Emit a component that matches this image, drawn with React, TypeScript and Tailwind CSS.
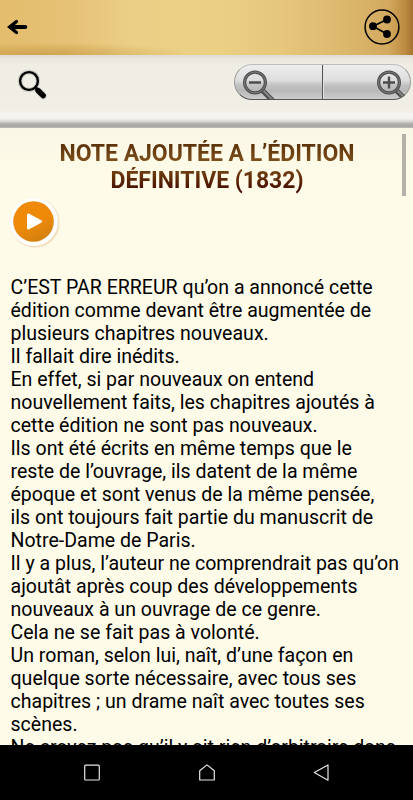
const lines = [
  "C’EST PAR ERREUR qu’on a annoncé cette",
  "édition comme devant être augmentée de",
  "plusieurs chapitres nouveaux.",
  "Il fallait dire inédits.",
  "En effet, si par nouveaux on entend",
  "nouvellement faits, les chapitres ajoutés à",
  "cette édition ne sont pas nouveaux.",
  "Ils ont été écrits en même temps que le",
  "reste de l’ouvrage, ils datent de la même",
  "époque et sont venus de la même pensée,",
  "ils ont toujours fait partie du manuscrit de",
  "Notre-Dame de Paris.",
  "Il y a plus, l’auteur ne comprendrait pas qu’on",
  "ajoutât après coup des développements",
  "nouveaux à un ouvrage de ce genre.",
  "Cela ne se fait pas à volonté.",
  "Un roman, selon lui, naît, d’une façon en",
  "quelque sorte nécessaire, avec tous ses",
  "chapitres ; un drame naît avec toutes ses",
  "scènes.",
  "Ne croyez pas qu’il y ait rien d’arbitraire dans",
];

function Header() {
  return (
    <header className="h-[55px] shrink-0 bg-[linear-gradient(90deg,#e4bd6d_0%,#e6c277_18%,#ebcf86_32%,#ebd084_52%,#e6c77c_68%,#dbb76c_84%,#d3aa5f_94%,#bd8b42_98%,#a87431_100%)]">
      <div className="flex h-full items-center justify-between bg-[radial-gradient(ellipse_150px_13px_at_40px_55px,#c4963fb0,#c4963f00)] pr-[13px] pb-[2px] pl-[7px]">
        <button aria-label="Retour">
          <svg width="21" height="16" viewBox="0 0 21 16" fill="none" stroke="#000">
            <path d="M18.3 8H5" strokeWidth="4" strokeLinecap="round" />
            <path d="M9.5 2.5 3 8l6.5 5.5" strokeWidth="3.2" strokeLinecap="round" strokeLinejoin="round" />
            <path d="M0 8 8 2v12Z" fill="#000" stroke="none" />
          </svg>
        </button>
        <button aria-label="Partager">
          <svg width="36" height="36" viewBox="0 0 36 36">
            <circle cx="18" cy="18" r="16.9" fill="none" stroke="#000" strokeWidth="1.5" />
            <path d="M23 10.5 9 17.2l14 7.8" fill="none" stroke="#000" strokeWidth="1.6" />
            <circle cx="23" cy="10.5" r="3.9" />
            <circle cx="9" cy="17.2" r="3.9" />
            <circle cx="23" cy="25" r="3.9" />
          </svg>
        </button>
      </div>
    </header>
  );
}

function ZoomIcon({ plus = false }: { plus?: boolean }) {
  return (
    <svg width="36" height="36" viewBox="0 0 36 36" fill="none" className="block shrink-0">
      <path d="m19.5 24.5 14 14" stroke="#4f4f4f" strokeWidth="5.2" />
      <path d="m20.5 24.8 13 13" stroke="#858585" strokeWidth="2" />
      <circle cx="13" cy="17.5" r="10.4" stroke="#505050" strokeWidth="3.2" />
      <circle cx="13" cy="17.5" r="10.5" stroke="#7d7d7d" strokeWidth="1" />
      <path d="M7 17.5h12" stroke="#4d4d4d" strokeWidth="2.4" />
      {plus && <path d="M13 11.5v12" stroke="#4d4d4d" strokeWidth="2.4" />}
    </svg>
  );
}

function Toolbar() {
  return (
    <div className="flex h-[73px] shrink-0 items-start justify-between bg-[linear-gradient(180deg,#dfddd3_0px,#e8e6dc_3px,#efede4_10px,#f0eee5_54px,#f5f4f0_60px,#f1f0ec_64px,#d1cfcb_67px,#adaba7_69px,#aaa8a5_72px,#c8c6c0_73px)] pr-[2px] pl-[17px]">
      <button aria-label="Rechercher" className="mt-[14px]">
        <svg width="31" height="32" viewBox="0 0 31 32" fill="none" stroke="#000">
          <circle cx="12" cy="12" r="8.9" stroke="#00000022" strokeWidth="4.5" />
          <circle cx="12" cy="12" r="8.9" strokeWidth="2.4" />
          <path d="m18 18 4 4" strokeWidth="3" />
          <path d="m21.5 22 4.7 4.7" stroke="#00000022" strokeWidth="7" strokeLinecap="round" />
          <path d="m21 21.5 5.2 5.2" strokeWidth="5.4" strokeLinecap="round" />
        </svg>
      </button>
      <div className="mt-[9px] flex h-9 w-[177px] overflow-hidden rounded-full border border-[#9b9b99] border-t-[#bdbdbb] border-b-[#555] bg-[linear-gradient(180deg,#eeeeee_0%,#dedede_45%,#c4c4c4_58%,#b8b8b8_75%,#cdcdcd_100%)]">
        <button aria-label="Réduire" className="flex w-[88px] shrink-0 border-r border-[#555] pl-[7px]">
          <ZoomIcon />
        </button>
        <button aria-label="Agrandir" className="flex min-w-0 flex-1 border-l border-[#e2e2e2] pl-[52px]">
          <ZoomIcon plus />
        </button>
      </div>
    </div>
  );
}

function NavBar() {
  return (
    <nav className="h-[55px] shrink-0 bg-black">
      <div className="flex h-full items-center gap-[97px] pl-[83px]">
        <svg width="18" height="18" viewBox="0 0 18 18" fill="none" stroke="#e6e6e6" strokeWidth="1.2">
          <rect x="1.7" y="1.2" width="14.6" height="14.8" rx="1" />
        </svg>
        <svg width="18" height="18" viewBox="0 0 18 18" fill="none" stroke="#e6e6e6" strokeWidth="1.2" strokeLinejoin="round">
          <path d="M1.7 6.7 9 .9l7.3 5.8V16H1.7Z" />
        </svg>
        <svg width="18" height="18" viewBox="0 0 18 18" fill="none" stroke="#e6e6e6" strokeWidth="1.2" strokeLinejoin="round">
          <path d="M15 .9v15.4L1.3 8.5Z" />
        </svg>
      </div>
    </nav>
  );
}

export default function App() {
  return (
    <div className="flex h-[800px] w-[413px] flex-col overflow-hidden bg-[#fffbe9] font-[Roboto,sans-serif] text-black">
      <Header />
      <Toolbar />
      <main className="relative min-h-0 flex-1 overflow-hidden bg-[linear-gradient(180deg,#fbf7e7_0px,#fefae8_35px,#fffbe9_70px)]">
        <h1 className="pt-[12px] pl-[1px] text-center text-[23px] leading-[27px] font-bold tracking-[-0.03px]">
          <span className="block bg-[linear-gradient(180deg,#5c330b_5px,#80501b_22px)] bg-clip-text text-transparent">
            NOTE AJOUTÉE A L’ÉDITION
          </span>
          <span className="block bg-[linear-gradient(180deg,#6d3c0f_5px,#481000_22px)] bg-clip-text text-transparent">
            DÉFINITIVE (1832)
          </span>
        </h1>
        <button
          aria-label="Écouter"
          className="mt-[4px] ml-[10px] flex size-12 items-center justify-center rounded-full bg-white shadow-[1px_1px_2px_#d9a97088]"
        >
          <svg width="42" height="42" viewBox="0 0 42 42">
            <defs>
              <linearGradient id="orange" x1="0.3" y1="0" x2="0.7" y2="1">
                <stop offset="0.5" stopColor="#ef8a08" />
                <stop offset="1" stopColor="#d08010" />
              </linearGradient>
            </defs>
            <circle cx="20.5" cy="20.5" r="20.3" fill="url(#orange)" />
            <path d="M15.5 14v13l12-6.5Z" fill="#fff" stroke="#fff" strokeWidth="3" strokeLinejoin="round" />
          </svg>
        </button>
        <div className="mt-[29.5px] ml-[10.5px] text-[19.56px] leading-[23.01px] whitespace-nowrap">
          {lines.map((line) => (
            <p key={line}>{line}</p>
          ))}
        </div>
        {/* scroll thumb */}
        <div className="absolute top-[6px] right-[7px] h-[62px] w-[4px] bg-[#b3b1a8]" />
      </main>
      <NavBar />
    </div>
  );
}
